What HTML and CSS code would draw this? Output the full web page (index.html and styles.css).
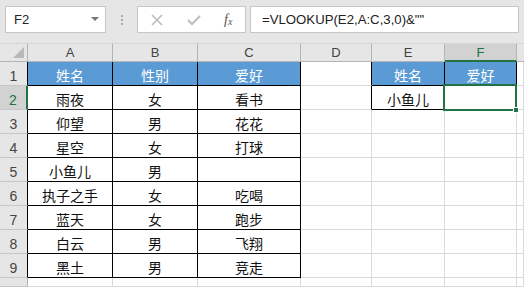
FILE: index.html
```html
<!DOCTYPE html>
<html lang="zh">
<head>
    <meta charset="UTF-8">
    <title>VLOOKUP</title>
    <link rel="stylesheet" href="styles.css">
</head>
<body>
    <div class="toolbar">
        <div class="namebox">
            <span>F2</span>
            <span class="arrow"></span>
        </div>
        <div class="dots"><i></i><i></i><i></i></div>
        <div class="btnbox">
            <svg class="ico" width="14" height="14" viewBox="0 0 14 14"><path d="M2 2 L12 12 M12 2 L2 12" stroke="#bdbdbd" stroke-width="1.6" fill="none"/></svg>
            <svg class="ico" width="16" height="14" viewBox="0 0 16 14"><path d="M2 7 L6 11 L14 3" stroke="#bdbdbd" stroke-width="2" fill="none"/></svg>
            <span class="fx">f<sub>x</sub></span>
        </div>
        <div class="formula">=VLOOKUP(E2,A:C,3,0)&amp;""</div>
    </div>

    <div class="sheet">
        <!-- column headers -->
        <div class="ch corner"><span class="tri"></span></div>
        <div class="ch">A</div>
        <div class="ch">B</div>
        <div class="ch">C</div>
        <div class="ch">D</div>
        <div class="ch">E</div>
        <div class="ch sel">F</div>
        <div class="ch last"></div>

        <!-- row 1 -->
        <div class="rh tb">1</div>
        <div class="c t blue">姓名</div>
        <div class="c t blue">性别</div>
        <div class="c t blue">爱好</div>
        <div class="c tr"></div>
        <div class="c t blue">姓名</div>
        <div class="c t blue">爱好</div>
        <div class="c"></div>

        <!-- row 2 -->
        <div class="rh sel">2</div>
        <div class="c t">雨夜</div>
        <div class="c t">女</div>
        <div class="c t">看书</div>
        <div class="c tr"></div>
        <div class="c t">小鱼儿</div>
        <div class="c t active"><span class="selbox"></span><span class="handle"></span></div>
        <div class="c"></div>

        <!-- row 3 -->
        <div class="rh tb">3</div>
        <div class="c t">仰望</div>
        <div class="c t">男</div>
        <div class="c t">花花</div>
        <div class="c"></div>
        <div class="c"></div>
        <div class="c"></div>
        <div class="c"></div>

        <!-- row 4 -->
        <div class="rh tb">4</div>
        <div class="c t">星空</div>
        <div class="c t">女</div>
        <div class="c t">打球</div>
        <div class="c"></div>
        <div class="c"></div>
        <div class="c"></div>
        <div class="c"></div>

        <!-- row 5 -->
        <div class="rh tb">5</div>
        <div class="c t">小鱼儿</div>
        <div class="c t">男</div>
        <div class="c t"></div>
        <div class="c"></div>
        <div class="c"></div>
        <div class="c"></div>
        <div class="c"></div>

        <!-- row 6 -->
        <div class="rh tb">6</div>
        <div class="c t">执子之手</div>
        <div class="c t">女</div>
        <div class="c t">吃喝</div>
        <div class="c"></div>
        <div class="c"></div>
        <div class="c"></div>
        <div class="c"></div>

        <!-- row 7 -->
        <div class="rh tb">7</div>
        <div class="c t">蓝天</div>
        <div class="c t">女</div>
        <div class="c t">跑步</div>
        <div class="c"></div>
        <div class="c"></div>
        <div class="c"></div>
        <div class="c"></div>

        <!-- row 8 -->
        <div class="rh tb">8</div>
        <div class="c t">白云</div>
        <div class="c t">男</div>
        <div class="c t">飞翔</div>
        <div class="c"></div>
        <div class="c"></div>
        <div class="c"></div>
        <div class="c"></div>

        <!-- row 9 -->
        <div class="rh tb">9</div>
        <div class="c t">黑土</div>
        <div class="c t">男</div>
        <div class="c t">竞走</div>
        <div class="c"></div>
        <div class="c"></div>
        <div class="c"></div>
        <div class="c"></div>

        <!-- row 10 (cut off) -->
        <div class="rh"></div>
        <div class="c"></div>
        <div class="c"></div>
        <div class="c"></div>
        <div class="c"></div>
        <div class="c"></div>
        <div class="c"></div>
        <div class="c"></div>
    </div>
</body>
</html>
```

FILE: styles.css
```css
*{
    margin: 0px;
    padding: 0px;
    box-sizing: border-box;
}

body{
    width: 524px;
    height: 287px;
    overflow: hidden;
    background-color: #e6e6e6;
    font-family: "Noto Sans CJK SC", "Liberation Sans", sans-serif;
}

/* formula bar */
.toolbar{
    height: 43px;
    display: flex;
    align-items: flex-start;
    padding: 6px 0 0 5px;
}

.namebox{
    width: 101px;
    height: 27px;
    background-color: #fff;
    border: 1px solid #c6c6c6;
    display: flex;
    align-items: center;
    justify-content: space-between;
    padding: 0 6px 0 8px;
    font-family: "Liberation Sans", sans-serif;
    font-size: 13px;
    color: #222;
}

.arrow{
    width: 0;
    height: 0;
    border-left: 4px solid transparent;
    border-right: 4px solid transparent;
    border-top: 4px solid #777;
    margin-bottom: 2px;
}

.dots{
    width: 31px;
    height: 27px;
    display: flex;
    flex-direction: column;
    align-items: center;
    justify-content: center;
    gap: 2px;
}

.dots i{
    width: 2px;
    height: 2px;
    background-color: #a8a8a8;
}

.btnbox{
    width: 109px;
    height: 27px;
    background-color: #fff;
    border: 1px solid #c6c6c6;
    display: flex;
    align-items: center;
    padding: 0 0 0 12px;
}

.btnbox .ico{
    margin-right: 22px;
}

.btnbox .ico + .ico{
    margin-right: 22px;
}

.fx{
    font-family: "Liberation Serif", serif;
    font-style: italic;
    font-size: 14px;
    color: #555;
    line-height: 1;
}

.fx sub{
    font-size: 10px;
    vertical-align: -1px;
}

.formula{
    width: 269px;
    height: 27px;
    margin-left: 4px;
    background-color: #fff;
    border: 1px solid #c6c6c6;
    padding-left: 11px;
    font-family: "Liberation Sans", sans-serif;
    font-size: 13.2px;
    line-height: 25px;
    color: #222;
    white-space: nowrap;
}

/* sheet */
.sheet{
    display: grid;
    grid-template-columns: 28px 85px 85px 103px 71px 73px 72px 1fr;
    grid-template-rows: 19px repeat(9, 24px) 1fr;
    height: 244px;
    background-color: #fff;
}

.ch{
    background-color: #e6e6e6;
    border-right: 1px solid #b4b4b4;
    border-bottom: 1px solid #b4b4b4;
    border-top: 1px solid #d6d6d6;
    display: flex;
    align-items: center;
    justify-content: center;
    font-family: "Liberation Sans", sans-serif;
    font-size: 13px;
    color: #444;
}

.ch.corner{
    position: relative;
}

.tri{
    position: absolute;
    right: 3px;
    bottom: 3px;
    width: 0;
    height: 0;
    border-left: 11px solid transparent;
    border-bottom: 11px solid #b9b9b9;
}

.ch.sel{
    background-color: #d2d2d2;
    border-bottom: 2px solid #217346;
    color: #217346;
}

.ch.last{
    border-right: none;
}

.rh{
    background-color: #e6e6e6;
    border-right: 1px solid #b4b4b4;
    border-bottom: 1px solid #c6c6c6;
    display: flex;
    align-items: flex-end;
    justify-content: center;
    padding-bottom: 1px;
    font-family: "Liberation Sans", sans-serif;
    font-size: 14px;
    color: #444;
}

.rh.tb{
    border-right: 1px solid #000;
}

.rh.sel{
    background-color: #d2d2d2;
    border-right: 2px solid #217346;
    color: #217346;
}

.c{
    border-right: 1px solid #d9d9d9;
    border-bottom: 1px solid #d9d9d9;
    display: flex;
    align-items: center;
    justify-content: center;
    padding-top: 2px;
    font-size: 14px;
    color: #111;
}

.c.t{
    border-right: 1px solid #000;
    border-bottom: 1px solid #000;
}

.c.tr{
    border-right: 1px solid #000;
}

.c.blue{
    background-color: #5b9bd5;
    color: #fff;
}

.c.active{
    position: relative;
}

.selbox{
    position: absolute;
    left: -2px;
    top: -2px;
    right: -1px;
    bottom: -2px;
    border: 2px solid #217346;
}

.handle{
    position: absolute;
    right: -3px;
    bottom: -4px;
    width: 6px;
    height: 6px;
    background-color: #217346;
    border: 1px solid #fff;
}
```
